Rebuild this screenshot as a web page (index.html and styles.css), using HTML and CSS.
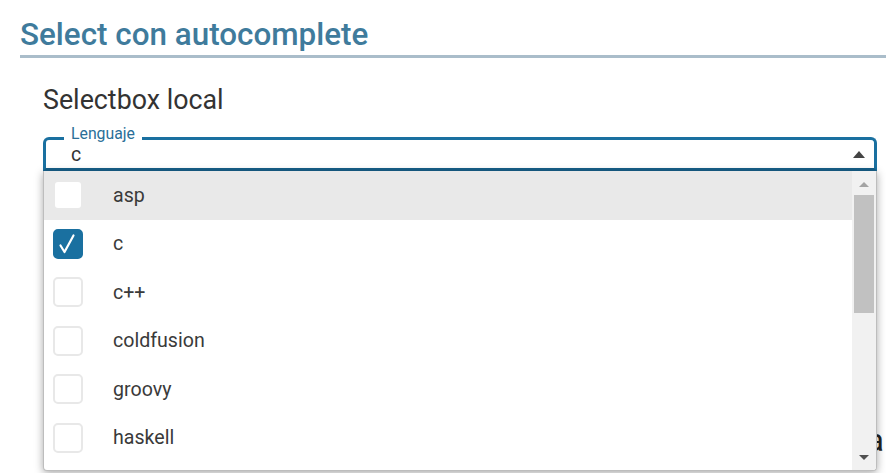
FILE: index.html
```html
<!DOCTYPE html>
<html lang="es">
<head>
<meta charset="utf-8">
<title>Select con autocomplete</title>
<link rel="stylesheet" href="styles.css">
</head>
<body>
<div class="page">
  <h1 class="title">Select con autocomplete</h1>
  <div class="section">
    <h2 class="subtitle">Selectbox local</h2>
    <div class="field">
      <span class="label">Lenguaje</span>
      <span class="value">c</span>
      <span class="caret"></span>
      <div class="dropdown">
        <ul class="options">
          <li class="option active"><span class="box"></span><span class="text">asp</span></li>
          <li class="option"><span class="box checked"><svg viewBox="0 0 30 30" width="30" height="30"><path d="M7.5 16.5 L11.5 23 L20.5 6.5" fill="none" stroke="#fff" stroke-width="2.2" stroke-linecap="round" stroke-linejoin="round"/></svg></span><span class="text">c</span></li>
          <li class="option"><span class="box"></span><span class="text">c++</span></li>
          <li class="option"><span class="box"></span><span class="text">coldfusion</span></li>
          <li class="option"><span class="box"></span><span class="text">groovy</span></li>
          <li class="option"><span class="box"></span><span class="text">haskell</span></li>
          <li class="option"><span class="box"></span><span class="text">java</span></li>
        </ul>
        <div class="scrollbar">
          <span class="arrow up"></span>
          <div class="track"><div class="thumb"></div></div>
          <span class="arrow down"></span>
        </div>
      </div>
    </div>
    <p class="behind">a</p>
  </div>
</div>
</body>
</html>
```
FILE: styles.css
```css
html, body {
  margin: 0;
  padding: 0;
  background: #fff;
  font-family: Roboto, "Liberation Sans", Arial, sans-serif;
  overflow: hidden;
}
.page {
  padding: 17px 0 0 20px;
  min-height: 473px;
  box-sizing: border-box;
}
.title {
  margin: 0;
  font-size: 31.4px;
  line-height: 36px;
  font-weight: 500;
  color: #3f7b9c;
  padding-bottom: 2px;
  border-bottom: 3px solid #aabdca;
}
.section {
  padding: 0 9px 0 23px;
}
.subtitle {
  margin: 28px 0 0;
  font-size: 26.8px;
  line-height: 28px;
  font-weight: 400;
  color: #333;
}
.field {
  position: relative;
  margin-top: 23px;
  height: 28px;
  border: 3px solid #1a70a0;
  border-bottom-color: #17608a;
  border-radius: 6px 6px 0 0;
}
.label {
  position: absolute;
  top: -15px;
  left: 18px;
  padding: 0 7px;
  background: #fff;
  font-size: 15.8px;
  line-height: 17px;
  color: #2a6f98;
}
.value {
  display: block;
  padding-left: 25px;
  font-size: 19.5px;
  line-height: 22px;
  padding-top: 4px;
  color: #333;
}
.caret {
  position: absolute;
  right: 9px;
  top: 11px;
  width: 0;
  height: 0;
  border-left: 6px solid transparent;
  border-right: 6px solid transparent;
  border-bottom: 7px solid #444;
}
.dropdown {
  position: absolute;
  left: -3px;
  right: -3px;
  top: 31px;
  height: 300px;
  box-sizing: border-box;
  display: flex;
  background: #fff;
  border: 1px solid #bdbdbd;
  border-top: 0;
  border-radius: 0 0 4px 4px;
  box-shadow: 0 2px 8px rgba(0, 0, 0, 0.35);
  overflow: hidden;
  z-index: 2;
}
.options {
  flex: 1;
  margin: 0;
  padding: 0;
  list-style: none;
  overflow: hidden;
}
.option {
  display: flex;
  align-items: center;
  height: 48.5px;
  padding-left: 9px;
  gap: 30px;
}
.option.active {
  background: #e9e9e9;
}
.box {
  width: 30px;
  height: 30px;
  box-sizing: border-box;
  border: 2px solid #e8e8e8;
  border-radius: 5px;
  background: #fff;
  flex: none;
}
.option.active .box {
  border-color: #e9e9e9;
}
.box.checked {
  background: #1a70a0;
  border-color: #1a70a0;
}
.box.checked svg {
  display: block;
  margin: -2px;
}
.text {
  font-size: 19.6px;
  color: #3a3a3a;
}
.scrollbar {
  width: 24px;
  flex: none;
  background: #f1f1f1;
  display: flex;
  flex-direction: column;
  align-items: center;
}
.arrow {
  width: 0;
  height: 0;
  border-left: 5px solid transparent;
  border-right: 5px solid transparent;
}
.arrow.up {
  margin: 11px 0 8px;
  border-bottom: 5px solid #a3a3a3;
}
.arrow.down {
  margin: 9px 0 10px;
  border-top: 5px solid #505050;
}
.track {
  flex: 1;
  align-self: stretch;
  padding: 0 2px;
}
.thumb {
  height: 118px;
  background: #c1c1c1;
}
.behind {
  margin: 250px 0 0;
  text-align: right;
  margin-right: -9px;
  padding-right: 2px;
  font-size: 32px;
  line-height: 38px;
  color: #222;
}
```
